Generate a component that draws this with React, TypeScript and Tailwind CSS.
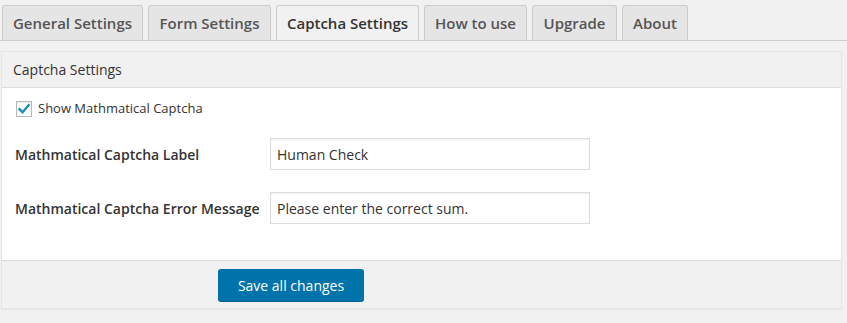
import React from "react";

const tabs = [
  { label: "General Settings", w: "w-[141px]", active: false },
  { label: "Form Settings", w: "w-[123px]", active: false },
  { label: "Captcha Settings", w: "w-[143px]", active: true },
  { label: "How to use", w: "w-[103px]", active: false },
  { label: "Upgrade", w: "w-[85px]", active: false },
  { label: "About", w: "w-[66px]", active: false },
];

export default function App() {
  return (
    <div
      className="w-[847px] h-[323px] bg-[#f1f1f1] overflow-hidden text-[#444]"
      style={{ fontFamily: '"Open Sans", "Noto Sans", sans-serif' }}
    >
      <div className="flex items-end gap-[5px] pl-[2px] pt-[5px] border-b border-[#ccc]">
        {tabs.map((t) => (
          <div
            key={t.label}
            className={`${t.w} h-[35px] flex items-center justify-center border border-b-0 border-[#ccc] rounded-t-[3px] text-[15px] font-semibold ${
              t.active ? "bg-[#f1f1f1] text-[#333]" : "bg-[#e5e5e5] text-[#555]"
            }`}
          >
            {t.label}
          </div>
        ))}
      </div>

      <div className="mt-[10px] ml-[1px] w-[841px] border border-[#e5e5e5] bg-white shadow-[0_1px_1px_rgba(0,0,0,0.04)]">
        <div className="h-[36px] bg-[#f1f1f1] border-b border-[#dddddd] flex items-center pl-[11px] text-[14px] text-[#333]">
          Captcha Settings
        </div>

        <div className="h-[172px] pt-[13px]">
          <div className="flex items-center pl-[14px] h-[16px]">
            <div className="w-[16px] h-[16px] border border-[#b4b9be] bg-white shadow-[inset_0_1px_2px_rgba(0,0,0,0.1)] flex items-center justify-center">
              <svg width="14" height="14" viewBox="0 0 14 14">
                <path
                  d="M2.5 7.2 L5.6 10.2 L11.6 3.2"
                  fill="none"
                  stroke="#1e8cbe"
                  strokeWidth="2.4"
                  strokeLinecap="square"
                />
              </svg>
            </div>
            <span className="ml-[6px] text-[13px] text-[#333]">Show Mathmatical Captcha</span>
          </div>

          <div className="mt-[21px] flex items-center pl-[13px] h-[32px]">
            <div className="w-[255px] text-[14px] font-semibold text-[#333]">Mathmatical Captcha Label</div>
            <div className="w-[320px] h-[32px] border border-[#ddd] shadow-[inset_0_1px_2px_rgba(0,0,0,0.07)] flex items-center pl-[6px] text-[14px] text-[#333]">
              Human Check
            </div>
          </div>

          <div className="mt-[22px] flex items-center pl-[13px] h-[32px]">
            <div className="w-[255px] text-[14px] font-semibold text-[#333]">Mathmatical Captcha Error Message</div>
            <div className="w-[320px] h-[32px] border border-[#ddd] shadow-[inset_0_1px_2px_rgba(0,0,0,0.07)] flex items-center pl-[6px] text-[14px] text-[#333]">
              Please enter the correct sum.
            </div>
          </div>
        </div>

        <div className="h-[48px] bg-[#f1f1f1] border-t border-[#dddddd] flex items-start pt-[8px] pl-[216px]">
          <button className="w-[146px] h-[32px] rounded-[3px] bg-[#0073aa] text-white text-[14px] shadow-[0_1px_0_#006799]">
            Save all changes
          </button>
        </div>
      </div>
    </div>
  );
}
